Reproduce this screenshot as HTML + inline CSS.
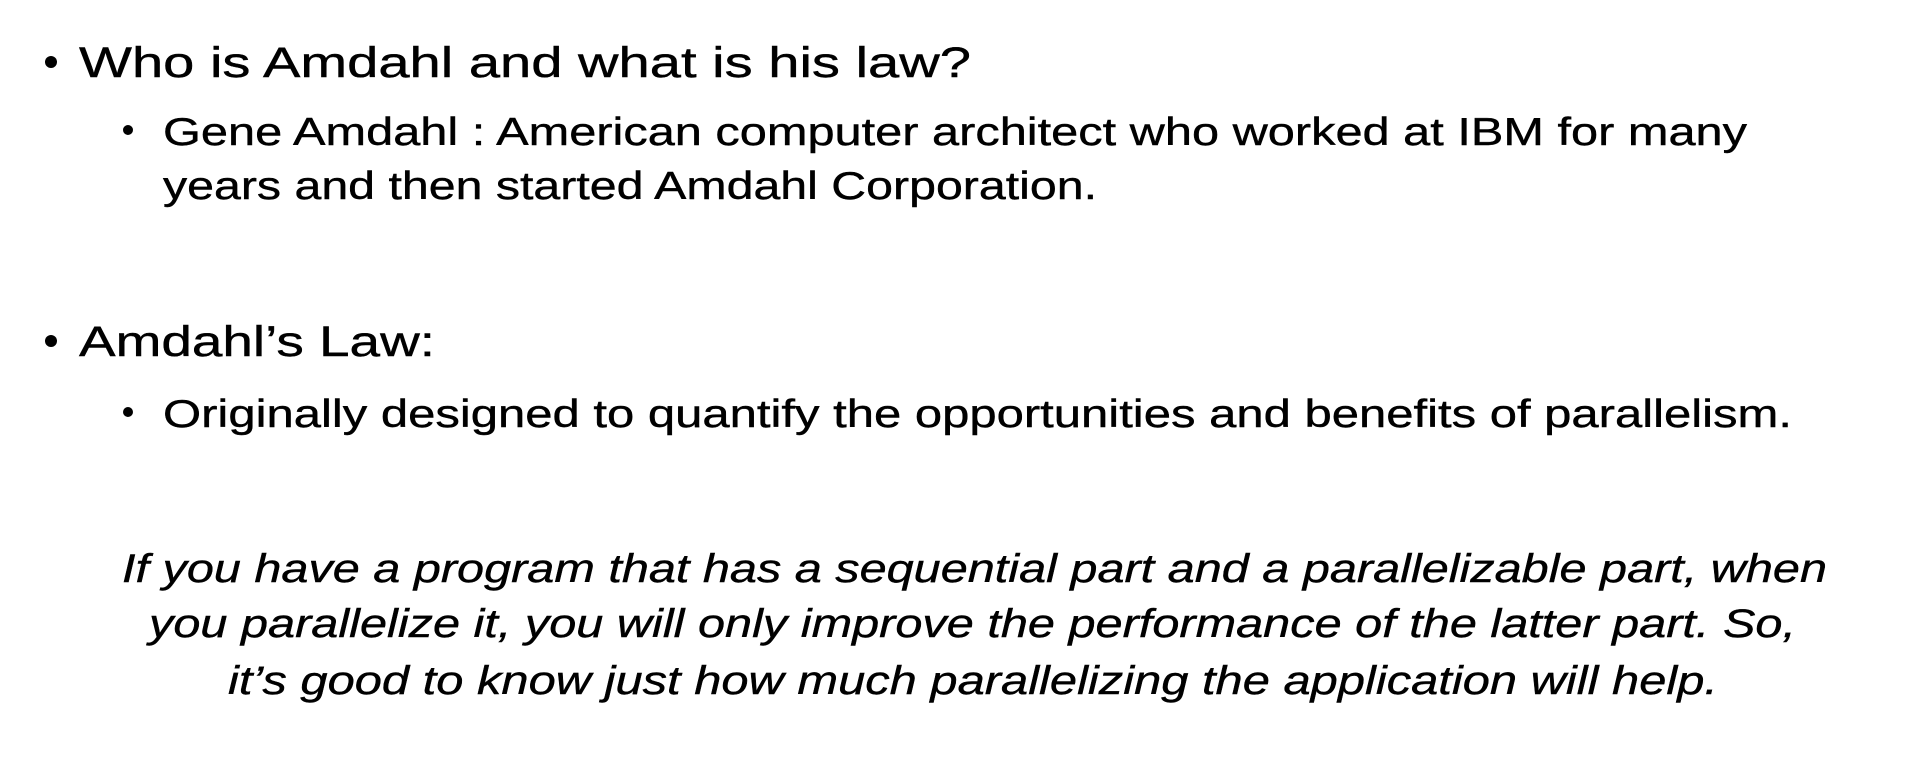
<!DOCTYPE html>
<html><head><meta charset="utf-8"><style>
html,body{margin:0;padding:0;background:#fff;width:1920px;height:764px;overflow:hidden}
.t{position:absolute;white-space:nowrap;font-family:"Liberation Sans",sans-serif;color:#000;line-height:1;transform-origin:0 0;-webkit-text-stroke:0.4px #000}
.i{font-style:italic}
.b{position:absolute;background:#000;border-radius:50%}
</style></head><body>
<div class="b" style="left:45px;top:56px;width:12px;height:12px"></div>
<div class="t" style="left:79px;top:42px;font-size:43px">Who is Amdahl and what is his law?</div>
<div class="b" style="left:123px;top:125px;width:10px;height:10px"></div>
<div class="t" style="left:163px;top:113px;font-size:39px">Gene Amdahl : American computer architect who worked at IBM for many</div>
<div class="t" style="left:163px;top:167px;font-size:39px">years and then started Amdahl Corporation.</div>
<div class="b" style="left:45px;top:335px;width:12px;height:12px"></div>
<div class="t" style="left:79px;top:321px;font-size:43px">Amdahl’s Law:</div>
<div class="b" style="left:123px;top:407px;width:10px;height:10px"></div>
<div class="t" style="left:163px;top:395px;font-size:39px">Originally designed to quantify the opportunities and benefits of parallelism.</div>
<div class="t i" style="left:122px;top:549px;font-size:40px">If you have a program that has a sequential part and a parallelizable part, when</div>
<div class="t i" style="left:149px;top:604px;font-size:40px">you parallelize it, you will only improve the performance of the latter part. So,</div>
<div class="t i" style="left:228px;top:661px;font-size:40px">it’s good to know just how much parallelizing the application will help.</div>
<script>
var w=[892,1584,934,356,1629,1705,1647,1490];
var els=document.querySelectorAll('.t');
for(var k=0;k<els.length;k++){var e=els[k];var cw=e.getBoundingClientRect().width;if(cw>0)e.style.transform='scaleX('+(w[k]/cw)+')';}
</script>
</body></html>
